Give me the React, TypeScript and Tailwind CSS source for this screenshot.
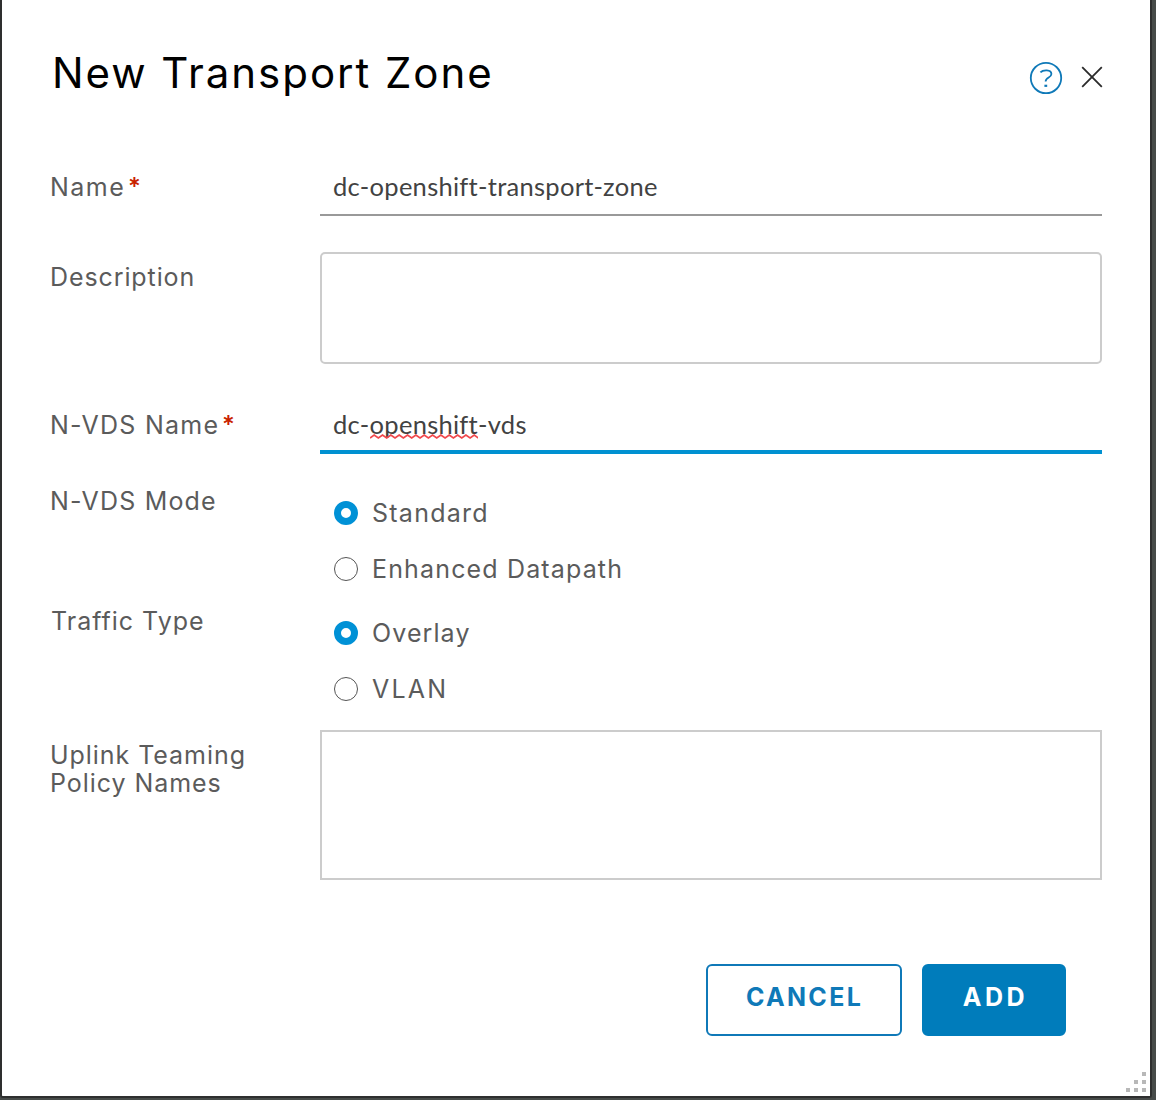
import type { ReactNode } from "react";

function Label({ children, className = "" }: { children: ReactNode; className?: string }) {
  return (
    <div className={`w-[269px] shrink-0 whitespace-nowrap text-[25px] leading-7 text-[#5b5b5b] ${className}`}>
      {children}
    </div>
  );
}

function Required() {
  return <span className="relative top-0.5 ml-[3px] font-['Lato'] text-[29px] leading-[0] font-black tracking-normal text-[#c92100]">*</span>;
}

function Radio({ checked, label, spacing }: { checked?: boolean; label: string; spacing: string }) {
  return (
    <div className="flex h-14 items-center">
      <span
        className={
          checked
            ? "ml-3.5 size-6 shrink-0 rounded-full border-[7px] border-[#0091d6] bg-white"
            : "ml-3.5 size-6 shrink-0 rounded-full border-[1.5px] border-[#555] bg-white"
        }
      />
      <span className={`ml-[14px] whitespace-nowrap text-[25px] leading-7 text-[#5b5b5b] ${spacing}`}>{label}</span>
    </div>
  );
}

function HelpIcon() {
  return (
    <svg width="34" height="34" viewBox="0 0 34 34" fill="none" stroke="#0f79b8" strokeWidth="1.8">
      <circle cx="17" cy="17" r="15.2" />
      <path d="M11.4 11.4C14 8.6 22.4 8.2 22.4 13C22.4 17 16.6 16 16.6 20.6" />
      <path d="M15.4 24.8h2.8" strokeWidth="2.2" />
    </svg>
  );
}

function CloseIcon() {
  return (
    <svg className="mb-[3px]" width="22" height="22" viewBox="0 0 22 22" fill="none" stroke="#2b2b2b" strokeWidth="1.8">
      <path d="M1.2 1.2L20.8 20.8M20.8 1.2L1.2 20.8" />
    </svg>
  );
}

function Squiggle() {
  const d = "M0 4" + Array.from({ length: 26 }, (_, i) => (i % 2 ? "l4 3" : "l4 -3")).join("");
  return (
    <svg className="absolute -bottom-px left-0 h-[5px] w-full" viewBox="0 0 104 5" preserveAspectRatio="none" fill="none" stroke="#f0484c" strokeWidth="1.6">
      <path d={d} />
    </svg>
  );
}

export default function App() {
  return (
    <div className="h-[1100px] w-[1156px] bg-[#474b49] pr-1 pb-0.5 font-['Inter',sans-serif]">
      <div className="relative flex h-full flex-col rounded-b-[3px] border-x-2 border-b-2 border-[#2e2f2f] bg-white pr-12 pl-[49px]">
        <header className="flex h-40 shrink-0 items-start justify-between">
          <h1 className="mt-[47px] ml-px text-[42px] leading-[52px] font-normal tracking-[1.95px] text-black">New Transport Zone</h1>
          <div className="-mr-px mt-[61px] flex items-center gap-[18px]">
            <HelpIcon />
            <CloseIcon />
          </div>
        </header>

        <div className="flex h-14 shrink-0">
          <Label className="-ml-px mr-px pt-[13px] tracking-[1.5px]">Name<Required /></Label>
          <div className="w-[782px] border-b-2 border-[#999] pt-3 pl-[13px] font-['Lato'] text-[25.5px] leading-7 tracking-[0.28px] text-[#424242]">
            dc-openshift-transport-zone
          </div>
        </div>

        <div className="mt-9 flex h-28 shrink-0">
          <Label className="-ml-px mr-px pt-[11px] tracking-[0.9px]">Description</Label>
          <div className="w-[782px] rounded-[5px] border-2 border-[#ccc]" />
        </div>

        <div className="mt-[34px] flex h-14 shrink-0">
          <Label className="-ml-px mr-px pt-[13px] tracking-[1.25px]">N-VDS Name<Required /></Label>
          <div className="w-[782px] border-b-4 border-[#0091d1] pt-3 pl-[13px] font-['Lato'] text-[25.5px] leading-7 tracking-[0.28px] text-[#424242]">
            dc-<span className="relative inline-block">openshift<Squiggle /></span>-vds
          </div>
        </div>

        <div className="mt-[31px] flex h-[120px] shrink-0">
          <Label className="-ml-px mr-px pt-0.5 tracking-[1.2px]">N-VDS Mode</Label>
          <div>
            <Radio checked label="Standard" spacing="tracking-[1.25px]" />
            <Radio label="Enhanced Datapath" spacing="tracking-[1.15px]" />
          </div>
        </div>

        <div className="flex h-[120px] shrink-0">
          <Label className="pt-0.5 tracking-[1px]">Traffic Type</Label>
          <div>
            <Radio checked label="Overlay" spacing="tracking-[1.1px]" />
            <Radio label="VLAN" spacing="tracking-[2.2px]" />
          </div>
        </div>

        <div className="mt-[5px] flex h-[150px] shrink-0">
          <Label className="-ml-px mr-px pt-[11px] tracking-[0.95px]">Uplink Teaming<br />Policy Names</Label>
          <div className="w-[782px] border-2 border-[#ccc]" />
        </div>

        <footer className="mt-[84px] mr-9 flex h-[72px] shrink-0 justify-end gap-5 text-[25px] leading-[62px] font-bold">
          <button className="w-[196px] rounded-[6px] border-2 border-[#0f79b8] pb-1.5 pl-px tracking-[2.3px] text-[#0f79b8]">CANCEL</button>
          <button className="w-36 rounded-[6px] border-2 border-[#007cbb] bg-[#007cbb] pb-1.5 pl-[3px] tracking-[3.6px] text-white">ADD</button>
        </footer>

        <svg className="absolute right-1 bottom-1 size-5" viewBox="0 0 20 20" fill="#b8b8b8">
          <path d="M16 0h4v4h-4zM8 8h4v4H8zM16 8h4v4h-4zM0 16h4v4H0zM8 16h4v4H8zM16 16h4v4h-4z" />
        </svg>
      </div>
    </div>
  );
}
